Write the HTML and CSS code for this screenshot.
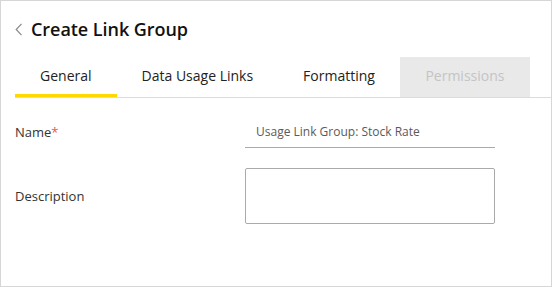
FILE: index.html
```html
<!DOCTYPE html>
<html>
<head>
<meta charset="utf-8">
<title>Create Link Group</title>
<link rel="stylesheet" href="styles.css">
</head>
<body>
<div class="panel">
  <div class="head">
    <svg class="back" width="8" height="13" viewBox="0 0 8 13"><path d="M6.5 0.8 L1.2 6.5 L6.5 12.2" fill="none" stroke="#8a8a8a" stroke-width="1.2"/></svg>
    <h1>Create Link Group</h1>
  </div>
  <div class="tabs">
    <div class="tab active">General</div>
    <div class="tab">Data Usage Links</div>
    <div class="tab">Formatting</div>
    <div class="tab disabled">Permissions</div>
  </div>
  <div class="form">
    <div class="row">
      <label>Name<span class="req">*</span></label>
      <div class="field line">Usage Link Group: Stock Rate</div>
    </div>
    <div class="row">
      <label>Description</label>
      <div class="field box"></div>
    </div>
  </div>
</div>
</body>
</html>
```
FILE: styles.css
```css
html, body { margin: 0; padding: 0; }
body { font-family: "Open Sans", "Liberation Sans", sans-serif; color: #222; background: #fff; }
.panel { width: 552px; height: 287px; box-sizing: border-box; border: 1px solid #d6d6d6; }
.head { display: flex; align-items: center; height: 56px; padding-left: 14px; }
.back { margin-right: 8px; margin-top: 1px; }
h1 { margin: 0; font-size: 18px; font-weight: 600; color: #111; letter-spacing: -0.05px; }
.tabs { display: flex; margin-left: 14px; height: 41px; box-sizing: border-box; border-bottom: 1px solid #dcdcdc; }
.tab { padding: 0 25px; height: 40px; font-size: 14px; box-sizing: border-box; border-bottom: 3px solid transparent; line-height: 38px; }
.tab.active { border-bottom-color: #ffd800; }
.tab.disabled { background: #e9e9e9; color: #c4c4c4; width: 130px; text-align: center; }
.form { padding: 24px 0 0 14px; }
.row { display: flex; align-items: flex-start; }
label { width: 230px; font-size: 13px; color: #333; line-height: 20px; }
.req { color: #e8574d; }
.field { width: 250px; box-sizing: border-box; }
.line { font-size: 12px; color: #5a5a5a; padding: 0 0 5px 11px; border-bottom: 1px solid #aaa; line-height: 20px; }
.row + .row { margin-top: 20px; }
.row + .row label { margin-top: 18px; }
.box { height: 56px; border: 1px solid #aaa; border-radius: 2px; }
```
